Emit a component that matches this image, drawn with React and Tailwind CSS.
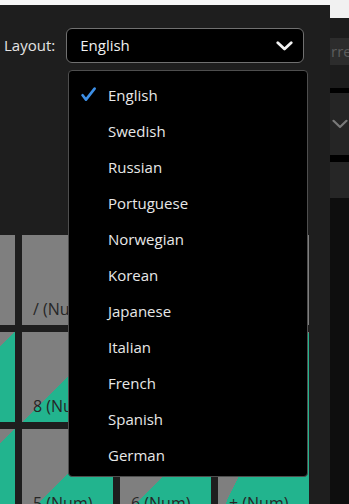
import React from "react";

const KEYS = [
  { label: "Num", col: 1, row: 1, fill: 0 },
  { label: "/ (Num)", col: 2, row: 1, fill: 0 },
  { label: "* (Num)", col: 3, row: 1, fill: 0 },
  { label: "- (Num)", col: 4, row: 1, fill: 0 },
  { label: "7 (Num)", col: 1, row: 2, fill: 1 },
  { label: "8 (Num)", col: 2, row: 2, fill: 1 },
  { label: "9 (Num)", col: 3, row: 2, fill: 1 },
  { label: "+ (Num)", col: 4, row: 2, fill: 1, tall: true },
  { label: "4 (Num)", col: 1, row: 3, fill: 1 },
  { label: "5 (Num)", col: 2, row: 3, fill: 1 },
  { label: "6 (Num)", col: 3, row: 3, fill: 1 },
];

const colClass = ["", "col-start-1", "col-start-2", "col-start-3", "col-start-4"];
const rowClass = ["", "row-start-1", "row-start-2", "row-start-3"];

const LANGS = [
  "English",
  "Swedish",
  "Russian",
  "Portuguese",
  "Norwegian",
  "Korean",
  "Japanese",
  "Italian",
  "French",
  "Spanish",
  "German",
];

function Key({ k }) {
  return (
    <div
      className={
        "flex items-end pl-[11px] pb-[5px] text-[16px] leading-[22px] text-[#262626] whitespace-nowrap overflow-hidden " +
        colClass[k.col] +
        " " +
        rowClass[k.row] +
        (k.tall ? " row-span-2" : "") +
        (k.fill
          ? " bg-[linear-gradient(to_top_left,#22b48e_50%,#7f7f7f_50%)]"
          : " bg-[#7f7f7f]")
      }
    >
      {k.label}
    </div>
  );
}

export default function App() {
  return (
    <div
      className="w-[349px] h-[504px] overflow-hidden flex bg-[#1e1e1e] text-[15px]"
      style={{ fontFamily: '"Open Sans", "Noto Sans", sans-serif' }}
    >
      {/* main panel */}
      <div className="relative w-[330px] shrink-0 flex flex-col overflow-hidden">
        <div className="h-[5px] bg-[#f7f7f7] shrink-0" />
        <div className="flex items-center mt-[23px] pl-[4px] h-[35px] shrink-0">
          <span className="text-[#e4e4e4] leading-none">Layout:</span>
          <div className="ml-[11px] w-[238px] h-[35px] bg-black border border-[#707070] rounded-[6px] flex items-center pl-[13px] pr-[10px] justify-between">
            <span className="text-[#f0f0f0]">English</span>
            <svg width="17" height="10" viewBox="0 0 17 10">
              <path
                d="M1.8 1.8 L8.5 8 L15.2 1.8"
                fill="none"
                stroke="#f2f2f2"
                strokeWidth="2.8"
                strokeLinecap="round"
                strokeLinejoin="round"
              />
            </svg>
          </div>
        </div>

        {/* keys */}
        <div className="mt-[172px] ml-[-76px] grid grid-cols-[91px_91px_91px_91px] grid-rows-[90px_90px_90px] gap-[7px]">
          {KEYS.map((k) => (
            <Key key={k.label} k={k} />
          ))}
        </div>

        {/* dropdown menu */}
        <div className="absolute left-[68px] top-[70px] w-[240px] h-[407px] bg-black border border-[#4e4e4e] rounded-[4px] pt-[6px]">
          {LANGS.map((l, i) => (
            <div key={l} className="relative h-[36px] flex items-center pl-[39px] text-[#e8e8e8]">
              {i === 0 && (
                <svg
                  width="15"
                  height="15"
                  viewBox="0 0 15 15"
                  className="absolute left-[12px] top-[10px]"
                >
                  <path
                    d="M1.6 8.2 L5 12.6 L13.6 1.6"
                    fill="none"
                    stroke="#3d8fe6"
                    strokeWidth="2.6"
                    strokeLinecap="round"
                    strokeLinejoin="round"
                  />
                </svg>
              )}
              <span>{l}</span>
            </div>
          ))}
        </div>
      </div>

      {/* right strip */}
      <div className="flex-1 flex flex-col overflow-hidden">
        <div className="h-[18px] bg-[#f1f1f1] shrink-0" />
        <div className="h-[20px] bg-[#1c1c1c] shrink-0" />
        <div className="h-[27px] bg-[#2c2c2c] shrink-0 flex items-center pl-[1px] overflow-hidden">
          <span className="text-[#5c5c5c] whitespace-nowrap">rrect</span>
        </div>
        <div className="h-[23px] bg-[#1c1c1c] shrink-0" />
        <div className="h-[5px] bg-black shrink-0" />
        <div className="h-[62px] bg-[#252525] shrink-0 flex items-center pl-[2px]">
          <svg width="16" height="10" viewBox="0 0 16 10">
            <path
              d="M1.5 1.8 L8 8 L14.5 1.8"
              fill="none"
              stroke="#7a7a7a"
              strokeWidth="2.2"
              strokeLinecap="round"
              strokeLinejoin="round"
            />
          </svg>
        </div>
        <div className="h-[7px] bg-black shrink-0" />
        <div className="h-[36px] bg-[#262626] shrink-0" />
        <div className="flex-1 bg-[#0e0e0e]" />
      </div>
    </div>
  );
}
